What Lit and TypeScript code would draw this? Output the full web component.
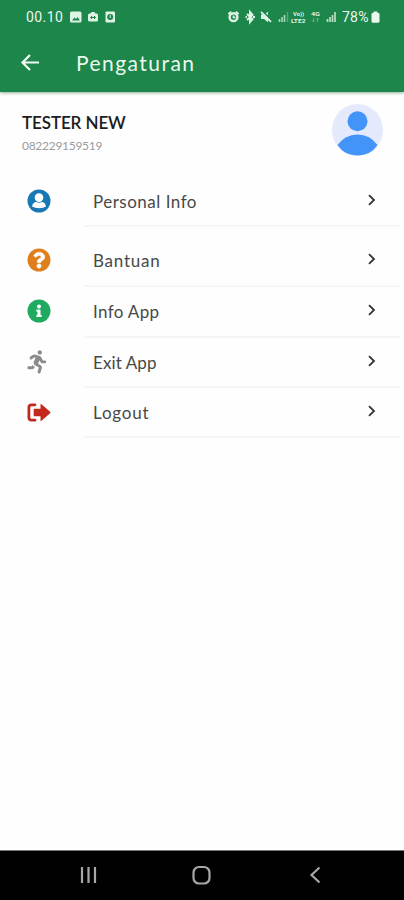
import { LitElement, html, css, svg } from "lit";
import { customElement } from "lit/decorators.js";

const rows = [
  { label: "Personal Info", cls: "r1", icon: svg`<circle cx="12" cy="12" r="11.5" fill="#1878b4"/><circle cx="12" cy="8.6" r="4.300" fill="#fff"/><path d="M5 17.6c.6-3.3 2.3-4.6 4.200-4.600q2.800 1.500 5.600 0c1.900 0 3.600 1.300 4.200 4.600q-2.800 1.700-7 1.700t-7-1.700z" fill="#fff"/>` },
  { label: "Bantuan", cls: "r2", icon: svg`<circle cx="12" cy="12" r="11.5" fill="#de7f1c"/><path transform="scale(.046875)" fill="#fff" stroke="#fff" stroke-width="10" d="M262.655 90c-54.497 0-89.255 22.957-116.549 63.758-3.536 5.286-2.353 12.415 2.715 16.258l34.699 26.31c5.205 3.947 12.621 3.008 16.665-2.122 17.864-22.658 30.113-35.797 57.303-35.797 20.429 0 45.698 13.148 45.698 32.958 0 14.976-12.363 22.667-32.534 33.976C247.128 238.528 216 254.941 216 296v4c0 6.627 5.373 12 12 12h56c6.627 0 12-5.373 12-12v-1.333c0-28.462 83.186-29.647 83.186-106.667 0-58.002-60.165-102-116.531-102zM256 338c-25.365 0-46 20.635-46 46 0 25.364 20.635 46 46 46s46-20.636 46-46c0-25.365-20.635-46-46-46z"/>` },
  { label: "Info App", cls: "r3", icon: svg`<circle cx="12" cy="12" r="11.5" fill="#20aa60"/><path transform="scale(.046875)" fill="#fff" d="M256 118c23.196 0 42 18.804 42 42s-18.804 42-42 42-42-18.804-42-42 18.804-42 42-42zm56 254c0 6.627-5.373 12-12 12h-88c-6.627 0-12-5.373-12-12v-24c0-6.627 5.373-12 12-12h12v-64h-12c-6.627 0-12-5.373-12-12v-24c0-6.627 5.373-12 12-12h64c6.627 0 12 5.373 12 12v100h12c6.627 0 12 5.373 12 12v24z"/>` },
  { label: "Exit App", cls: "r4", icon: svg`<path transform="translate(.4 .2) scale(.0455)" fill="#8b8b8b" d="M272 96c26.51 0 48-21.49 48-48S298.51 0 272 0s-48 21.490-48 48 21.490 48 48 48zM113.690 317.470l-14.800 34.520H32c-17.670 0-32 14.330-32 32s14.330 32 32 32h77.450c19.250 0 36.580-11.440 44.110-29.090l8.790-20.520-10.670-6.300c-17.320-10.230-30.060-25.370-37.990-42.610zM384 223.990h-44.030l-26.060-53.250c-12.500-25.550-35.450-44.230-61.780-50.940l-71.080-21.140c-28.300-6.800-57.770-.55-80.840 17.140l-39.670 30.410c-14.030 10.750-16.690 30.830-5.920 44.860s30.840 16.660 44.860 5.920l39.690-30.410c7.670-5.890 17.440-8 25.270-6.140l14.700 4.370-37.460 87.390c-12.620 29.480-1.310 64.010 26.300 80.310l84.980 50.170-27.470 87.730c-5.280 16.860 4.110 34.820 20.970 40.090 3.190 1 6.410 1.480 9.580 1.480 13.610 0 26.230-8.770 30.520-22.450l31.640-101.060c5.910-20.770-2.890-43.080-21.640-54.390l-61.240-36.140 31.310-78.280 20.270 41.430c8 16.340 24.920 26.890 43.110 26.890H384c17.670 0 32-14.330 32-32s-14.330-31.990-32-31.990z"/>` },
  { label: "Logout", cls: "r5", icon: svg`<path d="M8 3.800H4.500Q1.900 3.800 1.900 6.500v10Q1.900 19.200 4.500 19.200H8" fill="none" stroke="#c3281f" stroke-width="2.800" stroke-linecap="round"/><path d="M7.500 7.700h6V3.700q0-1.300 1-.4l8.600 7.500q.6.700 0 1.400l-8.600 7.500q-1 .9-1-.4v-4h-6q-.8 0-.8-.8V8.500q0-.8.8-.8z" fill="#c3281f"/>` },
];

@customElement("app-root")
export class AppRoot extends LitElement {
  static styles = css`
    :host { display: flex; flex-direction: column; width: 404px; height: 900px; background: #fefefe; font-family: Lato, "Noto Sans", sans-serif; overflow: hidden; }
    svg { display: block; flex: none; overflow: visible; }
    .top { background: #1c864b; height: 92px; flex: none; color: #eaf8ee; box-shadow: 0 1px 3px rgba(28, 100, 60, .5); }
    .status { display: flex; height: 34px; align-items: center; padding-left: 26px; font: 14px/34px Roboto, sans-serif; }
    .clock { width: 43px; letter-spacing: .4px; }
    .batt { margin-left: 5px; width: 29px; letter-spacing: .2px; }
    .bar { display: flex; align-items: center; height: 57px; padding-left: 21px; }
    .title { margin: 0 0 0 36px; font-size: 21px; font-weight: 400; letter-spacing: 1.45px; }
    .profile { display: flex; justify-content: space-between; height: 83px; padding: 12px 21px 0 22px; box-sizing: border-box; flex: none; }
    .name { margin-top: 7px; font-size: 17px; line-height: 24px; color: #1d1d1d; font-weight: 600; letter-spacing: -.1px; }
    .phone { font-size: 12px; line-height: 16px; margin-top: 3px; color: #9a9ca0; letter-spacing: -.28px; }
    .row { display: flex; height: 51px; flex: none; padding: 0 4px 0 27px; }
    .ic { width: 57px; display: flex; align-items: center; padding-bottom: 3px; box-sizing: border-box; }
    .body { flex: 1; display: flex; align-items: center; justify-content: space-between; padding: 0 23px 0 9px; border-bottom: 2px solid #f6f6f6; font-size: 17px; color: #484848; letter-spacing: .6px; }
    .chev { margin-bottom: 3px; }
    .r1 { height: 52px; margin-bottom: 9px; }
    .r1 .ic { padding-bottom: 0; }
    .r1 .body { padding-top: 2px; letter-spacing: .5px; }
    .r2 .body { letter-spacing: .75px; }
    .r3 .body { letter-spacing: .35px; }
    .r4 .body { letter-spacing: .1px; }
    .r5 .body { letter-spacing: .8px; }
    .r4, .r5 { height: 50px; }
    .r5 .ic { padding-bottom: 1px; }
    .nav { margin-top: auto; height: 50px; background: #010101; border-top: 1px solid #777; box-sizing: border-box; flex: none; }
  `;
  render() {
    return html`
      <header class="top">
        <div class="status">
          <span class="clock">00.10</span>
          <svg width="159" height="16" viewBox="69 9 159 16" fill="#dff3e5"><rect x="70" y="11.500" width="11.500" height="11" rx="1.500"/><path d="M72 20.500l2.500-3 1.500 1.500 1.500-2 2.500 3.500z" fill="#1c864b"/><path d="M88 15q0-1.500 1.500-1.500h1l1-1.500h3l1 1.500h1q1.500 0 1.500 1.500v5q0 1.500-1.500 1.500h-7Q88 21.500 88 20z"/><path d="M90.500 17.500h5M92 16l-1.500 1.500L92 19M94 16l1.500 1.500L94 19" stroke="#1c864b" fill="none"/><rect x="105.500" y="11.500" width="9.500" height="11" rx="1"/><circle cx="110.200" cy="17" r="3" fill="#1c864b"/><path d="M110.200 15v3" stroke="#dff3e5"/></svg>
          <svg width="109" height="16" viewBox="228 9 109 16" fill="none" stroke="#dff3e5"><circle cx="233.500" cy="17.200" r="3.900" stroke-width="2.500"/><path d="M228.300 14l3-2.200M238.700 14l-3-2.200M233.500 15.500v2h2" stroke-width="1.700"/><path d="M247 14l5.500 5-2.500 3V12l2.500 3-5.500 5M245.500 17h1.500M253 17h2" stroke-width="2"/><path d="M261 14.500h3l4-2.800v10.600l-4-3.300h-3z" fill="#dff3e5" stroke="none"/><path d="M262.500 11l9.500 9.500" stroke="#1c864b" stroke-width="1.700"/><path d="M261 11.800l10 10" stroke-width="1.800"/><path d="M279.500 22v-3M282 22v-5M284.500 22v-7" stroke="#a7d5b7" stroke-width="1.600"/><path d="M287.500 22V12" stroke="#57a478" stroke-width="1.500"/><path d="M327.500 22v-3M330 22v-5M332.500 22v-7M335 22v-10" stroke="#b8dfc5" stroke-width="1.700"/><g fill="#dff3e5" stroke="none" font-family="Roboto" font-weight="700" font-size="5"><text x="293" y="16" textLength="11" lengthAdjust="spacingAndGlyphs">Vo))</text><text x="291" y="22.500" textLength="14.500" lengthAdjust="spacingAndGlyphs">LTE2</text><text x="311" y="16" textLength="9" lengthAdjust="spacingAndGlyphs">4G</text></g><path d="M313.500 18v4M312 20.500l1.500 1.500 1.500-1.500M317.500 22v-4M316 19.500l1.500-1.500 1.500 1.500" stroke="#69b187" stroke-width=".9"/></svg>
          <span class="batt">78%</span>
          <svg width="9" height="12" viewBox="0 0 9 12"><path d="M2.500.5h4V2h1q1 0 1 1v7.500q0 1.300-1.500 1.300H2q-1.500 0-1.500-1.300V3q0-1 1-1h1z" fill="#eaf8ee"/></svg>
        </div>
        <div class="bar">
          <svg width="19" height="18" viewBox="0 0 19 18"><path d="M18 8.500H2M9 1L1.500 8.500 9 16" fill="none" stroke="#f2fbf5" stroke-width="2.200"/></svg>
          <h1 class="title">Pengaturan</h1>
        </div>
      </header>
      <section class="profile">
        <div><div class="name">TESTER NEW</div><div class="phone">082229159519</div></div>
        <svg width="51" height="52" viewBox="0 0 51 52"><ellipse cx="25.500" cy="26" rx="25.500" ry="26" fill="#e5e9fc"/><circle cx="25.500" cy="17.200" r="10" fill="#4294f8"/><path d="M5.500 41Q13 30.500 25.500 30.500T45.500 41Q38.500 51.500 25.500 51.500T5.500 41z" fill="#4294f8"/></svg>
      </section>
      ${rows.map((r) => html`<div class="row ${r.cls}">
        <div class="ic"><svg width="24" height="24" viewBox="0 0 24 24">${r.icon}</svg></div>
        <div class="body"><span>${r.label}</span><svg class="chev" width="9" height="12" viewBox="0 0 9 12"><path d="M1 1.200l5 4.800-5 4.800" fill="none" stroke="#333" stroke-width="1.800"/></svg></div>
      </div>`)}
      <nav class="nav"><svg width="404" height="49" viewBox="0 851 404 49" fill="none" stroke="#a8a8a8" stroke-width="2.200"><path d="M82 867v16M88.500 867v16M95 867v16"/><rect x="193.500" y="867" width="16" height="16.500" rx="5.500"/><path d="M319.500 867.500l-8 7.500 8 7.500"/></svg></nav>
    `;
  }
}
